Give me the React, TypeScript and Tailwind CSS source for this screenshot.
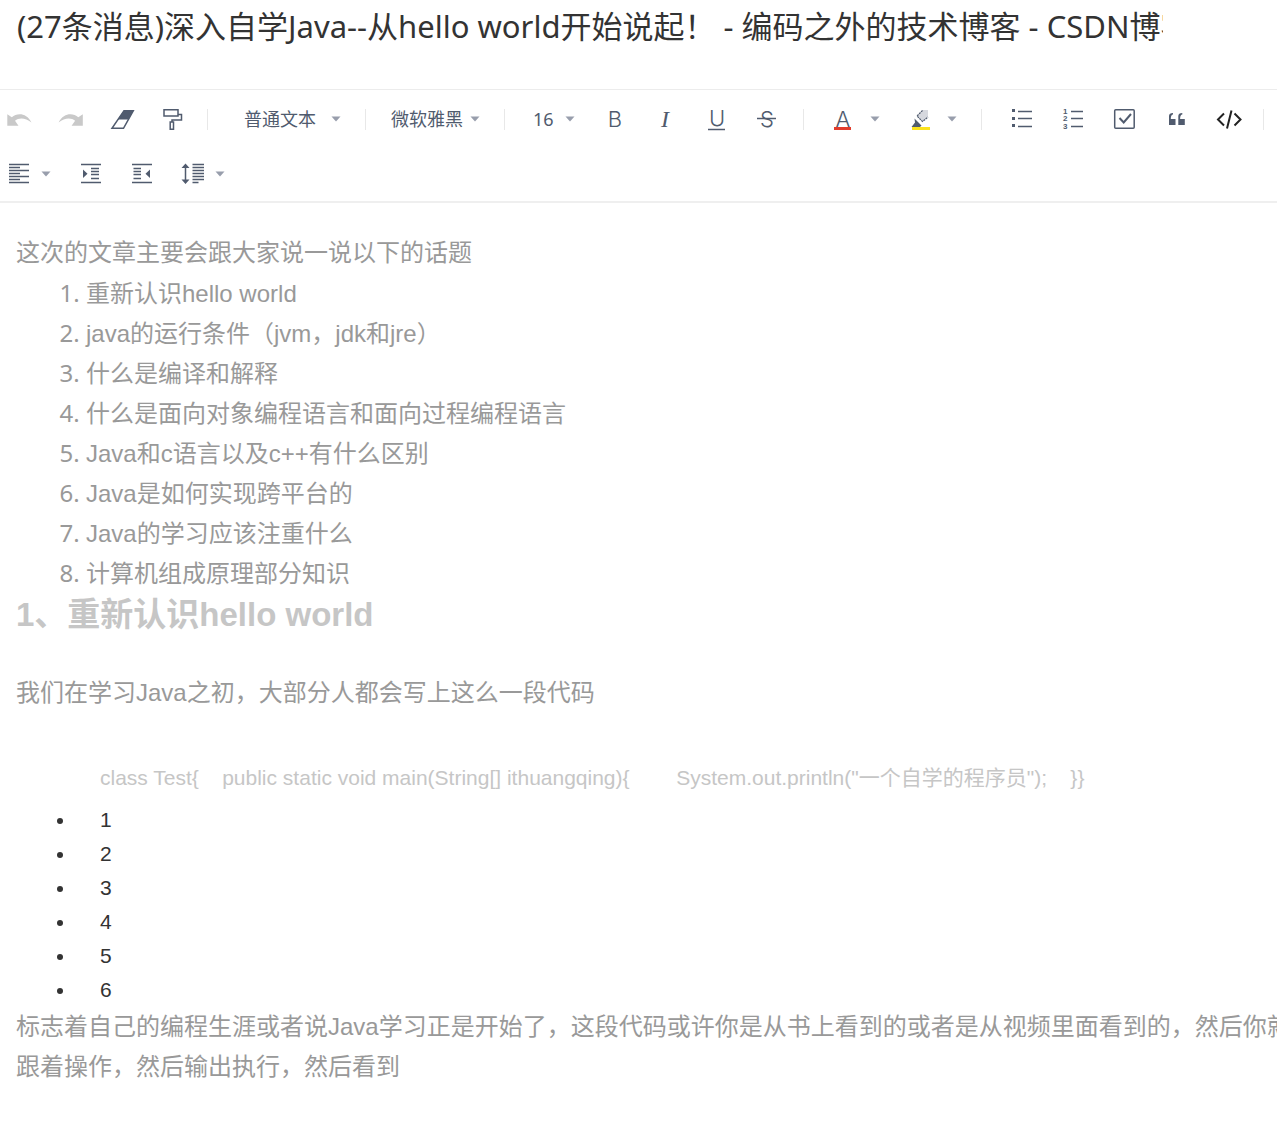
import React, { useState } from 'react';

const topics = [
  '重新认识hello world',
  'java的运行条件（jvm，jdk和jre）',
  '什么是编译和解释',
  '什么是面向对象编程语言和面向过程编程语言',
  'Java和c语言以及c++有什么区别',
  'Java是如何实现跨平台的',
  'Java的学习应该注重什么',
  '计算机组成原理部分知识',
];

const lineNumbers = [1, 2, 3, 4, 5, 6];

const Caret = () => (
  <svg viewBox="0 0 10 6" className="w-[10px] h-[6px] shrink-0" aria-hidden="true">
    <path d="M0.5 0.5H9.5L5 5.5Z" fill="#989eac" />
  </svg>
);

const Divider = ({ className }: { className: string }) => (
  <div className={`w-px h-[21px] shrink-0 bg-[#e8e8e8] ${className}`} />
);

const ToolButton = ({ label, children }: { label: string; children: React.ReactNode }) => (
  <button type="button" aria-label={label} className="size-7 shrink-0 text-[#505b6e] hover:bg-gray-100">
    <svg viewBox="0 0 28 28" className="size-7" fill="none" stroke="currentColor" strokeWidth="1.5">
      {children}
    </svg>
  </button>
);

const Letter = ({ x, y, children }: { x: number; y: number; children: string }) => (
  <text
    x={x}
    y={y}
    textAnchor="middle"
    fontSize="22"
    fontWeight="300"
    fontFamily="Inter, sans-serif"
    fill="currentColor"
    stroke="none"
  >
    {children}
  </text>
);

const CaretButton = ({ label }: { label: string }) => (
  <button type="button" aria-label={label} className="flex h-7 items-center">
    <Caret />
  </button>
);

const ToolSelect = ({
  label,
  options,
  className,
}: {
  label: string;
  options: string[];
  className: string;
}) => {
  const [value, setValue] = useState(options[0]);

  return (
    <label className={`relative flex h-7 shrink-0 items-center ${className}`}>
      <select
        aria-label={label}
        value={value}
        onChange={e => setValue(e.target.value)}
        className="w-full appearance-none bg-transparent text-lg text-[#505b6e] outline-none"
      >
        {options.map(option => (
          <option key={option}>{option}</option>
        ))}
      </select>
      <span className="pointer-events-none absolute right-0 top-0 flex h-7 items-center">
        <Caret />
      </span>
    </label>
  );
};

const Toolbar = () => (
  <div
    role="toolbar"
    className="flex flex-wrap items-center gap-y-[27px] border-t border-b-2 border-t-[#ececec] border-b-[#efefef] pt-[15px] pb-[13px] pl-[5px]"
  >
    <div className="flex gap-[23px]">
      <ToolButton label="撤销">
        <path
          d="M2.3 9.3L6.8 12.3C12 7.5 21.5 7.5 26.5 17.5C20.5 12.8 14 12.5 10 15.8L13.5 20.8H2.3Z"
          fill="#c9c9c9"
          stroke="none"
        />
      </ToolButton>
      <ToolButton label="重做">
        <path
          d="M26.8 9.3L22.3 12.3C17.1 7.5 7.6 7.5 2.6 17.5C8.6 12.8 15.1 12.5 19.1 15.8L15.6 20.8H26.8Z"
          fill="#c9c9c9"
          stroke="none"
        />
      </ToolButton>
      <ToolButton label="清除格式">
        <path d="M17 5.7H26.3L16.5 23.3H5L17 5.7Z" />
        <path d="M17 5.5H26.5L21.3 14.5H10.8Z" fill="currentColor" stroke="none" />
      </ToolButton>
      <ToolButton label="格式刷">
        <path d="M6 4.7H20V11H6ZM20 9.5H23.5V15H14V17M12.2 17H15.5V24.3H12.2Z" />
      </ToolButton>
    </div>

    <Divider className="ml-[21px]" />
    <ToolSelect label="段落格式" options={['普通文本', '标题 1', '标题 2']} className="ml-9 w-[97px]" />
    <Divider className="ml-6" />
    <ToolSelect label="字体" options={['微软雅黑', '宋体', '黑体']} className="ml-[25px] w-[89px]" />
    <Divider className="ml-6" />
    <ToolSelect label="字号" options={['16', '18', '24']} className="ml-7 w-[42px]" />

    <div className="ml-[26px] flex gap-[23px]">
      <ToolButton label="加粗">
        <Letter x={14} y={22}>B</Letter>
      </ToolButton>
      <ToolButton label="斜体">
        <text
          x="13"
          y="22"
          textAnchor="middle"
          fontSize="24"
          fontStyle="italic"
          fontFamily="Liberation Serif, serif"
          fill="currentColor"
          stroke="none"
        >
          I
        </text>
      </ToolButton>
      <ToolButton label="下划线">
        <Letter x={14} y={21}>U</Letter>
        <path d="M5 24.5H22" />
      </ToolButton>
      <ToolButton label="删除线">
        <Letter x={13} y={22}>S</Letter>
        <path d="M3 13.5H22" />
      </ToolButton>
    </div>

    <Divider className="ml-[21px]" />
    <div className="ml-[25px] flex gap-[13px]">
      <ToolButton label="文字颜色">
        <Letter x={14} y={22}>A</Letter>
        <path d="M5 22H22V25H5Z" fill="#e23c2c" stroke="none" />
      </ToolButton>
      <CaretButton label="选择文字颜色" />
    </div>
    <div className="ml-[27px] flex gap-3">
      <ToolButton label="背景颜色">
        <path d="M15.5 5H21V12L15.5 17L9.5 11Z" fill="#d6d8de" stroke="none" />
        <path d="M15.5 5.5L10 11L15.5 16.5L21 12" strokeWidth="1.2" strokeDasharray="2 0.8" />
        <path d="M7.5 13.5L14.5 20.5L13 22H4.5L8 17.5Z" fill="currentColor" stroke="none" />
        <path d="M5 22H23V25H5Z" fill="#fbe21c" stroke="none" />
      </ToolButton>
      <CaretButton label="选择背景颜色" />
    </div>

    <Divider className="ml-6" />
    <div className="ml-[26px] flex gap-6">
      <ToolButton label="无序列表">
        <path d="M4 4H7V7H4ZM4 12H7V15H4ZM4 19H7V22H4Z" fill="currentColor" stroke="none" />
        <path d="M10 6.5H24M10 13.5H24M10 21.5H24" />
      </ToolButton>
      <ToolButton label="有序列表">
        <g fontSize="8" fontWeight="700" fill="currentColor" stroke="none" fontFamily="Liberation Sans, sans-serif">
          <text x="3" y="9">1</text>
          <text x="3" y="16">2</text>
          <text x="3" y="24">3</text>
        </g>
        <path d="M11 6.5H23M11 13.5H23M11 21.5H23" />
      </ToolButton>
      <ToolButton label="任务列表">
        <rect x="2.7" y="4.7" width="19.5" height="18.5" rx="1" />
        <path d="M7.5 13L11.7 17.5L19 9" strokeWidth="2" />
      </ToolButton>
      <ToolButton label="引用">
        <path
          d="M5 20V11Q5 8 9 8V9.5Q6.8 9.5 6.8 14H11.5V20ZM14.3 20V11Q14.3 8 18.3 8V9.5Q16.1 9.5 16.1 14H20.8V20Z"
          fill="currentColor"
          stroke="none"
        />
      </ToolButton>
      <ToolButton label="代码块">
        <path d="M8 8.5L2 14.5L8 20.5M18.5 8.5L24.5 14.5L18.5 20.5M15.5 5.5L11 23.5" stroke="#222" strokeWidth="2" />
      </ToolButton>
    </div>
    <Divider className="ml-[19px]" />

    <div className="flex gap-2">
      <ToolButton label="对齐方式">
        <path d="M4 4.5H24M4 7.5H15M4 10.5H24M4 13.5H15M4 16.5H24M4 19.5H15M4 22.5H24" />
      </ToolButton>
      <CaretButton label="选择对齐方式" />
    </div>
    <div className="ml-[26px] flex gap-[23px]">
      <ToolButton label="增加缩进">
        <path d="M4 4.5H24M14 8.5H22M14 11.5H22M14 14.5H22M14 18.5H22M4 22.5H24" />
        <path d="M6 9.5L10.5 13.7L6 18Z" fill="currentColor" stroke="none" />
      </ToolButton>
      <ToolButton label="减少缩进">
        <path d="M4 4.5H24M5.5 8.5H13M5.5 11.5H13M5.5 14.5H13M5.5 18.5H13M4 22.5H24" />
        <path d="M22 9.5L17.5 13.7L22 18Z" fill="currentColor" stroke="none" />
      </ToolButton>
    </div>
    <div className="ml-[23px] flex gap-2">
      <ToolButton label="行高">
        <path d="M6.5 6V22M13.5 4.5H25M13.5 7.5H25M13.5 10.5H25M13.5 13.5H25M13.5 16.5H25M13.5 19.5H25M13.5 22.5H19.5" />
        <path d="M6.5 3.5L10.5 8H2.5ZM6.5 24L10.5 19.5H2.5Z" fill="currentColor" stroke="none" />
      </ToolButton>
      <CaretButton label="选择行高" />
    </div>
  </div>
);

const App = () => {
  const [title, setTitle] = useState(
    '(27条消息)深入自学Java--从hello world开始说起！ - 编码之外的技术博客 - CSDN博客'
  );

  return (
    <div
      lang="zh-CN"
      className="min-h-screen overflow-x-hidden bg-white font-['Noto_Sans','Noto_Sans_CJK_SC',sans-serif]"
    >
      <header className="flex h-[89px] items-start pr-[114px] pl-[17px]">
        <input
          type="text"
          aria-label="标题"
          value={title}
          onChange={e => setTitle(e.target.value)}
          className="h-12 min-w-0 flex-1 bg-transparent text-[31px] text-[#333] outline-none"
        />
      </header>

      <Toolbar />

      <article className="px-4 pt-[30px] pb-[34px] text-2xl/10 whitespace-nowrap text-[#999]">
        <p className="font-['Liberation_Sans','Noto_Sans_CJK_SC',sans-serif]">
          这次的文章主要会跟大家说一说以下的话题
        </p>
        <ol className="list-decimal pl-[70px]">
          {topics.map(topic => (
            <li key={topic} className="h-10">
              <span className="font-['Liberation_Sans','Noto_Sans_CJK_SC',sans-serif]">{topic}</span>
            </li>
          ))}
        </ol>

        <div className="font-['Liberation_Sans','Noto_Sans_CJK_SC',sans-serif]">
          <h1 className="mb-9 text-[33px]/[44px] font-bold text-[#c6c6c6]">1、重新认识hello world</h1>
          <p>我们在学习Java之初，大部分人都会写上这么一段代码</p>

          <pre className="mt-12 pl-[84px] font-[inherit] text-[21px]/[34px] text-[#c6c6c6]">
            {'class Test{    public static void main(String[] ithuangqing){        System.out.println("一个自学的程序员");    }}'}
          </pre>
          <ul className="mt-2 list-disc pl-[60px] text-[21px]/[34px] text-[#333]">
            {lineNumbers.map(n => (
              <li key={n} className="pl-6">{n}</li>
            ))}
          </ul>

          <p>
            标志着自己的编程生涯或者说Java学习正是开始了，这段代码或许你是从书上看到的或者是从视频里面看到的，然后你就
            <br />
            跟着操作，然后输出执行，然后看到
          </p>
        </div>
      </article>
    </div>
  );
};

export default App;
